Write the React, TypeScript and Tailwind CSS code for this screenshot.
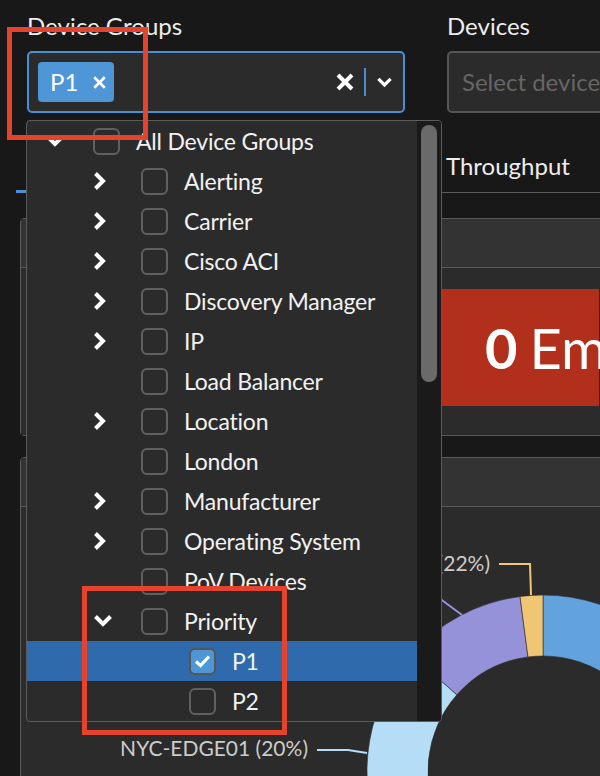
import React from "react";

type Row = { label: string; level: 0 | 1 | 2; chevron?: "down" | "right"; checked?: boolean };

const rows: Row[] = [
  { label: "All Device Groups", level: 0, chevron: "down" },
  { label: "Alerting", level: 1, chevron: "right" },
  { label: "Carrier", level: 1, chevron: "right" },
  { label: "Cisco ACI", level: 1, chevron: "right" },
  { label: "Discovery Manager", level: 1, chevron: "right" },
  { label: "IP", level: 1, chevron: "right" },
  { label: "Load Balancer", level: 1 },
  { label: "Location", level: 1, chevron: "right" },
  { label: "London", level: 1 },
  { label: "Manufacturer", level: 1, chevron: "right" },
  { label: "Operating System", level: 1, chevron: "right" },
  { label: "PoV Devices", level: 1 },
  { label: "Priority", level: 1, chevron: "down" },
  { label: "P1", level: 2, checked: true },
  { label: "P2", level: 2 },
];

const indent = ["pl-[18px]", "pl-[66px]", "pl-[114px]"];

function ChevronRight() {
  return (
    <svg width="16" height="20" viewBox="0 0 16 20">
      <path d="M2.5 2.5 L10 10 L2.5 17.5" fill="none" stroke="#fff" strokeWidth="4" />
    </svg>
  );
}

function ChevronDown({ w = 20, h = 16 }: { w?: number; h?: number }) {
  return (
    <svg width={w} height={h} viewBox="0 0 20 16">
      <path d="M2.5 3.5 L10 11 L17.5 3.5" fill="none" stroke="#fff" strokeWidth="4" />
    </svg>
  );
}

function Cross({ size, stroke }: { size: number; stroke: number }) {
  return (
    <svg width={size} height={size} viewBox="0 0 20 20">
      <path d="M3 3 L17 17 M17 3 L3 17" fill="none" stroke="#fff" strokeWidth={stroke} />
    </svg>
  );
}

function Checkbox({ checked }: { checked?: boolean }) {
  if (checked) {
    return (
      <span className="flex h-[27px] w-[27px] shrink-0 items-center justify-center rounded-[6px] border-2 border-[#565656] bg-[#4f96d6]">
        <svg width="17" height="14" viewBox="0 0 17 14">
          <path d="M2 7.5 L6.5 11.5 L15 2.5" fill="none" stroke="#fff" strokeWidth="3.2" />
        </svg>
      </span>
    );
  }
  return <span className="h-[27px] w-[27px] shrink-0 rounded-[6px] border-2 border-[#606060]" />;
}

function TreeMenu() {
  return (
    <div className="absolute left-[-1px] top-full z-10 mt-[7px] flex w-[416px] overflow-hidden rounded-[4px] border border-[#5c5c5c] bg-[#2b2b2b]">
      <div className="flex-1">
        {rows.map((r) => (
          <div
            key={r.label}
            className={`flex h-[40px] items-center ${indent[r.level]} ${r.checked ? "bg-[#2f6bac]" : ""}`}
          >
            <span className="flex w-[48px] shrink-0 items-center">
              {r.chevron === "right" && <ChevronRight />}
              {r.chevron === "down" && <ChevronDown />}
            </span>
            <Checkbox checked={r.checked} />
            <span className="ml-[16px] text-[23px] leading-[30px] tracking-[-0.2px] text-[#f2f2f2]">{r.label}</span>
          </div>
        ))}
      </div>
      <div className="w-[24px] bg-[#1a1a1a] pt-[4px]">
        <div className="mx-auto h-[257px] w-[16px] rounded-full bg-[#6a6a6a]" />
      </div>
    </div>
  );
}

function arc(cx: number, cy: number, R: number, r: number, a0: number, a1: number) {
  const p = (a: number, rad: number) => {
    const t = (a * Math.PI) / 180;
    return `${cx + rad * Math.sin(t)} ${cy - rad * Math.cos(t)}`;
  };
  const large = a1 - a0 > 180 ? 1 : 0;
  return `M${p(a0, R)} A${R} ${R} 0 ${large} 1 ${p(a1, R)} L${p(a1, r)} A${r} ${r} 0 ${large} 0 ${p(a0, r)} Z`;
}

function Donut() {
  const cx = 543;
  const cy = 773;
  const segs = [
    { a0: 0, a1: 150, c: "#62a3de" },
    { a0: 150, a1: 239.5, c: "#7fc68f" },
    { a0: 239.5, a1: 311.5, c: "#b5def6" },
    { a0: 311.5, a1: 352.5, c: "#9592d9" },
    { a0: 352.5, a1: 360, c: "#f0c674" },
  ];
  return (
    <svg className="block" width="600" height="300" viewBox="21 509 600 300">
      {segs.map((s) => (
        <path key={s.c} d={arc(cx, cy, 176, 115, s.a0, s.a1)} fill={s.c} stroke="#2b2b2b" strokeWidth="0.6" />
      ))}
      <polyline points="499,566 530,566 531,597" fill="none" stroke="#f0c674" strokeWidth="2" />
      <polyline points="400,571 462,617" fill="none" stroke="#9592d9" strokeWidth="2" />
      <polyline points="317,752 348,752 367,755" fill="none" stroke="#b5def6" strokeWidth="2" />
      <text x="490" y="573" textAnchor="end" fill="#cbcbcb" fontSize="21" fontFamily="Lato, sans-serif">
        (22%)
      </text>
      <text x="308" y="758" textAnchor="end" fill="#cbcbcb" fontSize="21" fontFamily="Lato, sans-serif">
        NYC-EDGE01 (20%)
      </text>
    </svg>
  );
}

export default function App() {
  return (
    <div className="relative h-[776px] w-[600px] overflow-hidden bg-[#181818] font-['Lato',sans-serif] text-[24px] text-[#ededed]">
      <div className="pl-[16px] pt-[11px]">
        <div className="flex pl-[11px]">
          <div className="w-[378px] shrink-0">
            <div className="mb-[10px] leading-[30px]">Device Groups</div>
            <div className="relative">
              <div className="flex h-[62px] items-center rounded-[5px] border-2 border-[#4a8fd4] bg-[#2b2b2b] pl-[9px] pr-[10px]">
                <span className="flex h-[40px] w-[76px] items-center rounded-[4px] bg-[#4f96d6] pl-[12px] pr-[7px] leading-[30px] text-white">
                  P1
                  <span className="ml-auto flex">
                    <Cross size={15} stroke={3.6} />
                  </span>
                </span>
                <span className="ml-auto flex">
                  <Cross size={20} stroke={4} />
                </span>
                <span className="ml-[9px] h-[28px] w-[2px] bg-[#4a8ed0]" />
                <span className="ml-[10px] flex">
                  <ChevronDown w={17} h={13} />
                </span>
              </div>
              <TreeMenu />
            </div>
          </div>
          <div className="ml-[42px] w-[220px] shrink-0">
            <div className="mb-[10px] leading-[30px]">Devices</div>
            <div className="flex h-[62px] items-center whitespace-nowrap rounded-[5px] border-2 border-[#555] bg-[#2b2b2b] pl-[13px] text-[#666]">
              Select devices
            </div>
          </div>
        </div>

        {/* tabs: the first two sit under the open dropdown */}
        <div className="mt-[38px] flex h-[42px] w-[600px] border-b border-[#5a5a5a] leading-[30px]">
          <div className="-mb-px w-[200px] shrink-0 border-b-[3px] border-[#4a90d9]" />
          <div className="w-[210px] shrink-0" />
          <div className="shrink-0 whitespace-nowrap pl-[20px]">Throughput</div>
        </div>

        <div className="ml-[4px] mt-[25px] w-[600px] rounded-[4px] border border-[#5a5a5a]">
          <div className="h-[49px] border-b border-[#5a5a5a] bg-[#333]" />
          <div className="h-[167px] bg-[#2b2b2b] px-[20px] pt-[21px]">
            <div className="flex h-[117px] items-center whitespace-nowrap bg-[#b22f1c] pl-[444px] text-[56px] text-white">
              <span className="font-bold">0</span>
              <span className="ml-[12px]">Emergency</span>
            </div>
          </div>
        </div>

        <div className="ml-[4px] mt-[21px] w-[600px] rounded-[4px] border border-[#5a5a5a]">
          <div className="h-[49px] border-b border-[#5a5a5a] bg-[#333]" />
          <div className="h-[300px] bg-[#2b2b2b]">
            <Donut />
          </div>
        </div>
      </div>

      <div className="absolute left-[7px] top-[27px] z-20 h-[113px] w-[141px] border-[5px] border-[#e5432d]" />
      <div className="absolute left-[82px] top-[586px] z-20 h-[149px] w-[205px] border-[5px] border-[#e5432d]" />
    </div>
  );
}
